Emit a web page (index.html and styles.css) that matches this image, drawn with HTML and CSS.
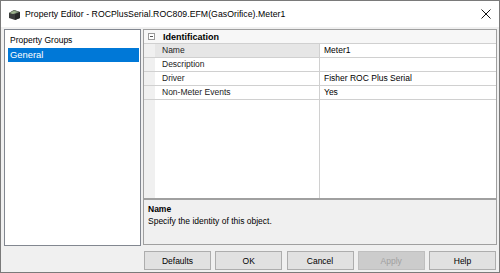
FILE: index.html
```html
<!DOCTYPE html>
<html lang="en">
<head>
	<meta charset="UTF-8">
	<meta name="viewport" content="width=device-width, initial-scale=1.0">
	<title>Property Editor</title>
	<link rel="stylesheet" href="styles.css">
</head>
<body>
	<div class="window">
		<div class="titlebar">
			<svg class="appicon" width="13" height="13" viewBox="0 0 13 13">
				<polygon points="1,5 6,2 12,4 12,10 7,12 1,10" fill="#3b3d3c"/>
				<polygon points="1,5 6,2 12,4 7,6" fill="#6f7f6a"/>
				<polygon points="2,5 6,3 9,4 5,6" fill="#9fb58e"/>
				<polygon points="7,6 12,4 12,10 7,12" fill="#262827"/>
			</svg>
			<span class="title">Property Editor - ROCPlusSerial.ROC809.EFM(GasOrifice).Meter1</span>
			<svg class="close" width="10" height="10" viewBox="0 0 10 10">
				<path d="M0.5 0.5 L9.5 9.5 M9.5 0.5 L0.5 9.5" stroke="#111" stroke-width="1"/>
			</svg>
		</div>

		<div class="content">
			<div class="groups">
				<div class="group">Property Groups</div>
				<div class="group selected">General</div>
			</div>

			<div class="editor">
				<div class="grid">
					<div class="category">
						<span class="toggle"></span>
						<span class="cat-name">Identification</span>
					</div>
					<div class="row">
						<div class="margin"></div>
						<div class="label active">Name</div>
						<div class="value">Meter1</div>
					</div>
					<div class="row">
						<div class="margin"></div>
						<div class="label">Description</div>
						<div class="value"></div>
					</div>
					<div class="row">
						<div class="margin"></div>
						<div class="label">Driver</div>
						<div class="value">Fisher ROC Plus Serial</div>
					</div>
					<div class="row">
						<div class="margin"></div>
						<div class="label">Non-Meter Events</div>
						<div class="value">Yes</div>
					</div>
					<div class="row filler">
						<div class="margin"></div>
						<div class="label"></div>
						<div class="value"></div>
					</div>
				</div>
				<div class="desc">
					<div class="desc-title">Name</div>
					<div class="desc-text">Specify the identity of this object.</div>
				</div>
			</div>
		</div>

		<div class="buttons">
			<button>Defaults</button>
			<button>OK</button>
			<button>Cancel</button>
			<button disabled>Apply</button>
			<button>Help</button>
		</div>
	</div>
</body>
</html>
```
FILE: styles.css
```css
body{
	margin: 0;
	background-color: #f0f0f0;
	font-family: "Liberation Sans", Arial, sans-serif;
	font-size: 8.5px;
	color: #000;
}
.window{
	box-sizing: border-box;
	width: 500px;
	height: 273px;
	border: 1px solid #7a7a7a;
	background-color: #f0f0f0;
	display: flex;
	flex-direction: column;
}
.titlebar{
	height: 26px;
	background-color: #fff;
	display: flex;
	align-items: center;
	flex-shrink: 0;
}
.appicon{
	margin-left: 7px;
	margin-right: 4px;
}
.title{
	font-size: 8.7px;
	letter-spacing: 0.05px;
	color: #000;
	flex: 1;
}
.close{
	margin-right: 8px;
}
.content{
	display: flex;
	padding: 2px 2px 0 3px;
	gap: 2px;
	height: 217px;
}
.groups{
	box-sizing: border-box;
	width: 137px;
	height: 217px;
	background-color: #fff;
	border: 1px solid #828790;
	padding: 4px 1px 0 3px;
}
.group{
	height: 13px;
	line-height: 13px;
	padding-left: 2px;
	margin-bottom: 1px;
}
.group.selected{
	height: 14px;
	line-height: 14px;
	background-color: #0078d7;
	color: #fff;
	font-size: 9.4px;
}
.editor{
	flex: 1;
	display: flex;
	flex-direction: column;
}
.grid{
	box-sizing: border-box;
	height: 170px;
	border: 1px solid #a0a0a0;
	background-color: #fff;
	display: flex;
	flex-direction: column;
}
.category{
	height: 13px;
	display: flex;
	align-items: center;
	background-color: #f7f7f7;
	border-bottom: 1px solid #d0d0d0;
}
.toggle{
	box-sizing: border-box;
	width: 7px;
	height: 7px;
	border: 1px solid #9a9a9a;
	background: linear-gradient(#555, #555) center / 3px 1px no-repeat #fff;
	margin: 0 8px 0 4px;
}
.cat-name{
	font-weight: bold;
	font-size: 9px;
}
.row{
	display: flex;
	height: 13px;
	border-bottom: 1px solid #d0d0d0;
}
.row.filler{
	flex: 1;
	border-bottom: none;
}
.margin{
	width: 11px;
	background-color: #f0f0f0;
}
.label{
	box-sizing: border-box;
	width: 165px;
	padding-left: 7px;
	line-height: 13px;
	border-right: 1px solid #d0d0d0;
	color: #222;
}
.label.active{
	background-color: #e6e6e6;
}
.value{
	flex: 1;
	padding-left: 4px;
	line-height: 13px;
}
.desc{
	box-sizing: border-box;
	height: 46px;
	border: 1px solid #a0a0a0;
	padding: 3px 4px;
}
.desc-title{
	font-weight: bold;
	line-height: 12px;
}
.desc-text{
	line-height: 12px;
}
.buttons{
	display: flex;
	justify-content: space-between;
	padding: 5px 3px 0 143px;
}
button{
	width: 67px;
	height: 19px;
	margin: 0;
	padding: 0;
	font-family: "Liberation Sans", Arial, sans-serif;
	font-size: 8.5px;
	color: #000;
	background-color: #e1e1e1;
	border: 1px solid #adadad;
	border-radius: 0;
}
button:disabled{
	background-color: #cccccc;
	border-color: #bfbfbf;
	color: #a0a0a0;
}
```
